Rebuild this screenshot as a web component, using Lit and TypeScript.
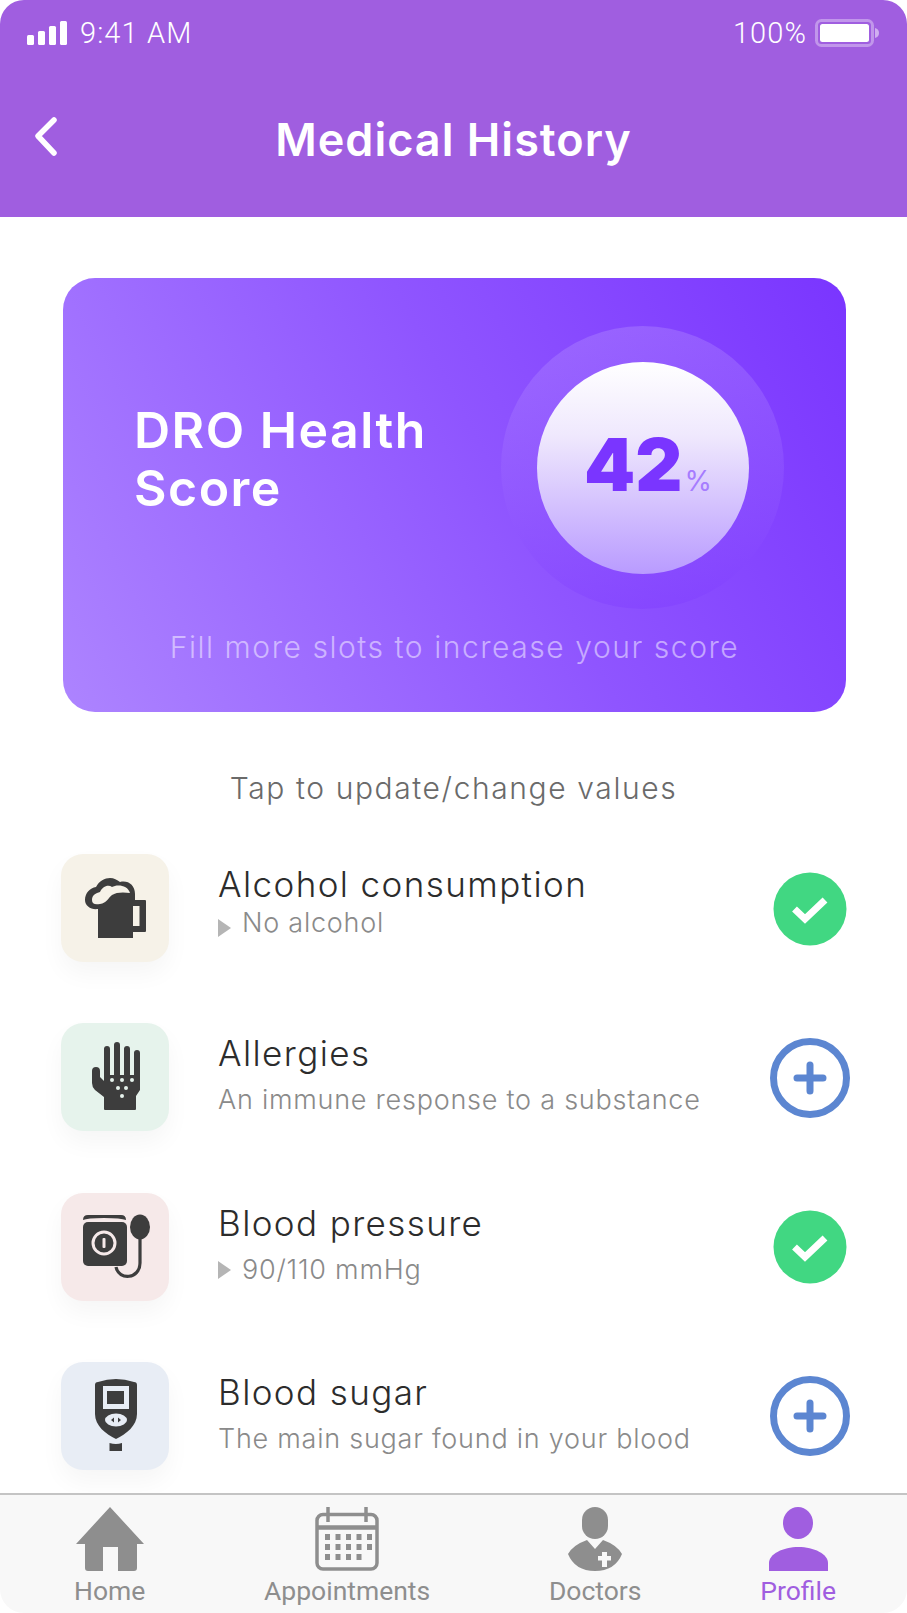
import { LitElement, html, css, svg } from "lit";
import { customElement } from "lit/decorators.js";

const ink = "#3d3d3d";

const beer = (bg: string) => svg`
  <path d="M24 46C24 39 29 34 35 33C38 27 44 24 49 24C53 24 56 26 59 28C67 26 74 31 74 40V46H84a1 1 0 0 1 1 1V77a1 1 0 0 1-1 1H72V84H37V55C30 56 24 52 24 46Z" fill=${ink}/>
  <rect x="72" y="52" width="6.5" height="20" fill=${bg}/>
  <path d="M31 46C31 41 35 39 39 38C41 33 47 30 51 33C56 30 67 31 69 39C63 38 55 38 51 41C47 44 46 49 39 50C34 51 31 50 31 46Z" fill=${bg}/>
`;

const hand = (bg: string) => svg`
  <path fill=${ink} d="M43 26a3 3 0 0 1 6 0V52H53V22a3 3 0 0 1 6 0V52H63V26a3 3 0 0 1 6 0V52H73V30a3 3 0 0 1 6 0V67L75 73V86a1 1 0 0 1-1 1H44a1 1 0 0 1-1-1V74L34 67Q31 64 31 60V48a4 4 0 0 1 8 0V54L43 58Z"/>
  <g fill=${bg}>
    <circle cx="51" cy="57" r="2"/><circle cx="61" cy="57" r="2"/><circle cx="71" cy="57" r="2"/>
    <circle cx="57" cy="65" r="2"/><circle cx="65" cy="65" r="2"/><circle cx="61" cy="73" r="2"/>
  </g>
`;

const pressure = (bg: string) => svg`
  <path d="M22 27Q22 22 27 22H60Q65 22 65 27Q60 25 43 25Q26 25 22 27Z" fill=${ink}/>
  <rect x="22" y="29" width="44" height="44" rx="5" fill=${ink}/>
  <circle cx="43" cy="50" r="11" fill=${ink} stroke=${bg} stroke-width="3"/>
  <rect x="41.5" y="45" width="3" height="10" rx="1" fill=${bg}/>
  <ellipse cx="79" cy="34" rx="10" ry="12.5" fill=${ink}/>
  <path d="M79 44V70C79 86 58 88 55 74" fill="none" stroke=${ink} stroke-width="3.2"/>
`;

const meter = (bg: string) => svg`
  <path d="M34 23Q34 20 37 20Q55 14 73 20Q76 20 76 23V52C76 64 65 72 55 77C45 72 34 64 34 52Z" fill=${ink}/>
  <rect x="42" y="24" width="26" height="23" fill=${bg}/>
  <rect x="46" y="29" width="17" height="13" fill=${ink}/>
  <ellipse cx="55" cy="58" rx="11" ry="6.5" fill=${bg}/>
  <path d="M53 55.5V60.5L50 58ZM57 55.5V60.5L60 58Z" fill=${ink}/>
  <path d="M48.500 81Q55 83 61 81V89H48.500Z" fill=${ink}/>
`;

const rows = [
  { title: "Alcohol consumption", sub: "No alcohol", done: true, tight: true, bg: "#f6f2e8", icon: beer },
  { title: "Allergies", sub: "An immune response to a substance", done: false, tight: false, bg: "#e6f3ec", icon: hand },
  { title: "Blood pressure", sub: "90/110 mmHg", done: true, tight: false, bg: "#f6e9e9", icon: pressure },
  { title: "Blood sugar", sub: "The main sugar found in your blood", done: false, tight: false, bg: "#e8edf5", icon: meter },
];

@customElement("app-root")
export class AppRoot extends LitElement {
  static styles = css`
    :host {
      display: block;
      width: 907px;
      height: 1613px;
      background: #fff;
      font-family: "Inter", "Lato", sans-serif;
    }
    .app {
      display: flex;
      flex-direction: column;
      height: 1613px;
      overflow: hidden;
      border-radius: 24px;
      background: #fff;
    }
    .head {
      height: 217px;
      flex: none;
      background: #a05ee0;
      color: #fff;
    }
    .status {
      display: flex;
      align-items: center;
      height: 28px;
      padding: 19px 28px 0 27px;
      font-family: "Roboto", sans-serif;
      font-weight: 300;
      font-size: 29px;
      letter-spacing: 1.1px;
    }
    .signal { margin-right: 13px; }
    .time { flex: 1; }
    .battery { margin-left: 8px; }
    .bar {
      display: flex;
      align-items: center;
      justify-content: center;
      position: relative;
      height: 46px;
      margin-top: 70px;
    }
    .back { position: absolute; left: 33px; top: -2px; }
    h1 {
      margin: 0;
      font-size: 45px;
      line-height: 46px;
      font-weight: 600;
      letter-spacing: 1px;
    }
    .card {
      flex: none;
      box-sizing: border-box;
      height: 434px;
      margin: 61px 61px 0 63px;
      padding: 48px 62px 0 71px;
      border-radius: 32px;
      color: #fff;
      background: linear-gradient(62deg, #ad84ff 0%, #8f55ff 55%, #7a35ff 100%);
    }
    .score {
      display: flex;
      align-items: center;
      justify-content: space-between;
    }
    h2 {
      margin: 0 0 18px;
      font-size: 50px;
      line-height: 58px;
      font-weight: 600;
      letter-spacing: 1.500px;
    }
    .ring {
      display: flex;
      align-items: center;
      justify-content: center;
      width: 283px;
      height: 283px;
      border-radius: 50%;
      background: linear-gradient(180deg, rgba(255, 255, 255, 0.15), rgba(122, 53, 255, 0.3));
    }
    .dial {
      display: flex;
      align-items: baseline;
      justify-content: center;
      width: 212px;
      height: 212px;
      box-sizing: border-box;
      padding-top: 66px;
      padding-left: 11px;
      border-radius: 50%;
      color: #7a35ff;
      background: linear-gradient(180deg, #fff 0%, #efe8fd 35%, #b99bff 100%);
    }
    .num {
      font-size: 73px;
      line-height: 73px;
      font-weight: 900;
      letter-spacing: 0;
    }
    .pct {
      margin-left: 2px;
      font-size: 28px;
      color: #a67cff;
    }
    .note {
      margin: 19px -62px 0 -71px;
      text-align: center;
      font-size: 30px;
      line-height: 38px;
      letter-spacing: 1.550px;
      font-weight: 300;
      color: rgba(255, 255, 255, 0.5);
    }
    .hint {
      flex: none;
      margin-top: 57px;
      text-align: center;
      font-size: 30px;
      line-height: 38px;
      letter-spacing: 1.600px;
      font-weight: 300;
      color: #6a6a6a;
    }
    .list {
      flex: 1;
      min-height: 0;
      display: flex;
      flex-direction: column;
      gap: 60.300px;
      padding: 47px 57px 0 61px;
    }
    .row {
      flex: none;
      display: flex;
      height: 109px;
    }
    .tile {
      flex: none;
      width: 108px;
      height: 108px;
      border-radius: 22px;
      box-shadow: 0 12px 24px rgba(0, 0, 0, 0.04);
    }
    .text {
      flex: 1;
      margin-left: 49px;
      padding-top: 8px;
    }
    .title {
      font-size: 35px;
      line-height: 44px;
      font-weight: 300;
      letter-spacing: 1.400px;
      color: #2c2c2c;
    }
    .sub {
      display: flex;
      align-items: center;
      gap: 11px;
      margin-top: 8px;
      font-size: 27px;
      line-height: 34px;
      font-weight: 300;
      letter-spacing: 0.750px;
      color: #8a8a8a;
    }
    .tight .sub { margin-top: 0; }
    .tight .tri { margin-top: 10px; }
    .tri {
      width: 0;
      height: 0;
      border-left: 13px solid #b5b5b5;
      border-top: 9px solid transparent;
      border-bottom: 9px solid transparent;
    }
    .state { flex: none; align-self: center; }
    nav {
      flex: none;
      display: flex;
      justify-content: space-between;
      box-sizing: border-box;
      height: 120px;
      padding: 12px 71px 0 74px;
      border-top: 2px solid #c4c4c4;
      background: #f8f8f8;
      font-family: "Roboto", sans-serif;
      font-size: 26.500px;
      color: #8e8e8e;
    }
    .tab {
      display: flex;
      flex-direction: column;
      align-items: center;
    }
    .tab svg { display: block; height: 64px; }
    .tab span { margin-top: 5px; line-height: 30px; }
    .on { color: #a05ee0; }
  `;

  renderRow(r: (typeof rows)[number]) {
    return html`
      <div class="row ${r.tight ? "tight" : ""}">
        <div class="tile" style="background:${r.bg}">
          <svg width="108" height="108" viewBox="0 0 108 108">${r.icon(r.bg)}</svg>
        </div>
        <div class="text">
          <div class="title">${r.title}</div>
          <div class="sub">${r.done ? html`<i class="tri"></i>` : ""}<span>${r.sub}</span></div>
        </div>
        ${r.done
          ? html`<svg class="state" width="80" height="80" viewBox="0 0 80 80">
              <circle cx="40" cy="40" r="36.500" fill="#41d782"/>
              <path d="M24.500 40L35 50L55 31" fill="none" stroke="#fff" stroke-width="7"/>
            </svg>`
          : html`<svg class="state" width="80" height="80" viewBox="0 0 80 80">
              <circle cx="40" cy="40" r="36.500" fill="none" stroke="#5c86d1" stroke-width="7"/>
              <path d="M40 27V53M27 40H53" fill="none" stroke="#5c86d1" stroke-width="7" stroke-linecap="round"/>
            </svg>`}
      </div>
    `;
  }

  render() {
    return html`
      <div class="app">
        <header class="head">
          <div class="status">
            <svg class="signal" width="40" height="24" viewBox="0 0 40 24" fill="#fff">
              <rect x="0" y="14" width="7" height="10" rx="1.500"/>
              <rect x="11" y="10" width="7" height="14" rx="1.500"/>
              <rect x="22" y="5" width="7" height="19" rx="1.500"/>
              <rect x="33" y="0" width="7" height="24" rx="1.500"/>
            </svg>
            <span class="time">9:41 AM</span>
            <span>100%</span>
            <svg class="battery" width="64" height="28" viewBox="0 0 64 28">
              <rect x="1.500" y="1.500" width="56" height="25" rx="5" fill="none" stroke="rgba(255,255,255,0.35)" stroke-width="3"/>
              <rect x="5" y="5" width="49" height="18" rx="2.500" fill="#fff"/>
              <path d="M60 9Q64 10 64 14Q64 18 60 19Z" fill="rgba(255,255,255,0.5)"/>
            </svg>
          </div>
          <div class="bar">
            <svg class="back" width="28" height="42" viewBox="0 0 28 42">
              <path d="M21 5L5 21L21 38" fill="none" stroke="#fff" stroke-width="5.500" stroke-linecap="round" stroke-linejoin="round"/>
            </svg>
            <h1>Medical History</h1>
          </div>
        </header>

        <section class="card">
          <div class="score">
            <h2>DRO Health<br />Score</h2>
            <div class="ring">
              <div class="dial"><span class="num">42</span><span class="pct">%</span></div>
            </div>
          </div>
          <div class="note">Fill more slots to increase your score</div>
        </section>

        <div class="hint">Tap to update/change values</div>

        <div class="list">${rows.map((r) => this.renderRow(r))}</div>

        <nav>
          <div class="tab">
            <svg width="68" height="64" viewBox="0 0 68 64" fill="#8e8e8e">
              <path d="M34 0L68 37H61V61a3 3 0 0 1-3 3H42V40H27V64H12a3 3 0 0 1-3-3V37H0Z"/>
            </svg>
            <span>Home</span>
          </div>
          <div class="tab">
            <svg width="64" height="64" viewBox="0 0 64 64" fill="none" stroke="#8e8e8e">
              <rect x="2" y="7.500" width="60" height="54.500" rx="6" stroke-width="3.500"/>
              <path d="M2 20.500H62" stroke-width="4.500"/>
              <path d="M13 0V15M51 0V15" stroke-width="3.500"/>
              <g fill="#8e8e8e" stroke="none">
                ${[0, 1, 2].map((row) =>
                  [0, 1, 2, 3, 4].slice(0, row === 2 ? 4 : 5).map(
                    (col) => svg`<rect x=${10 + col * 10.500} y=${27 + row * 10} width="5" height="6"/>`
                  )
                )}
              </g>
            </svg>
            <span>Appointments</span>
          </div>
          <div class="tab">
            <svg width="56" height="64" viewBox="0 0 56 64" fill="#8e8e8e">
              <rect x="15" y="0" width="26" height="32" rx="13"/>
              <path d="M20 33L28 42L36 33Q50 38 55 47Q48 64 28 64Q8 64 1 47Q6 38 20 33Z"/>
              <path d="M35 45H40V49H44V53.500H40V60H35V53.500H31V49H35Z" fill="#f8f8f8"/>
            </svg>
            <span>Doctors</span>
          </div>
          <div class="tab on">
            <svg width="59" height="64" viewBox="0 0 59 64" fill="#a05ee0">
              <ellipse cx="29" cy="16" rx="15" ry="16"/>
              <path d="M0 64V56C0 47 14 40 29.500 40C45 40 59 47 59 56V64Z"/>
            </svg>
            <span>Profile</span>
          </div>
        </nav>
      </div>
    `;
  }
}
